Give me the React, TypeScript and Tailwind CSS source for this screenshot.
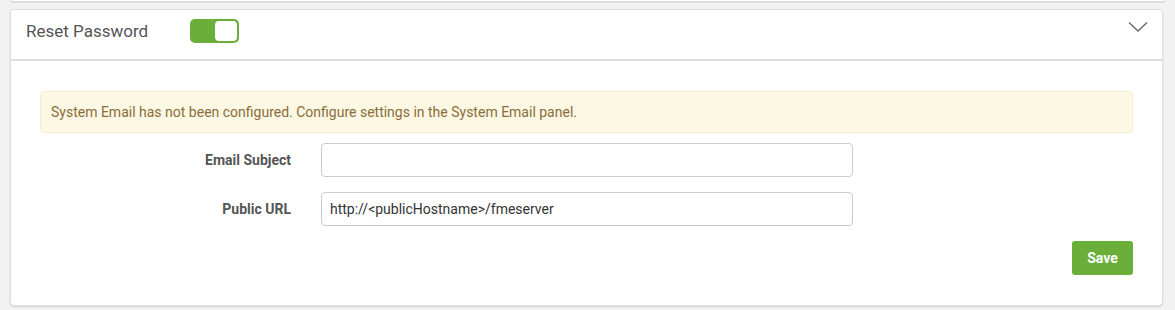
export default function App() {
  return (
    <main
      className="min-h-[310px] bg-[#f2f2f2] px-[10px] text-[#555]"
      style={{ fontFamily: "Roboto, 'Liberation Sans', sans-serif" }}
    >
      {/* tail of the previous panel */}
      <div className="h-[3px] rounded-b-[3px] border-x border-b-2 border-[#ddd] bg-white" />

      <section className="mt-[6px] w-[1153px] overflow-hidden rounded-[4px] border border-[#ddd] bg-white shadow-[0_1px_2px_rgba(0,0,0,0.12)]">
        {/* Header */}
        <div className="flex h-[51px] items-start border-b-2 border-[#ddd] px-[15px] pt-[9px]">
          <h2 className="w-[164px] text-[17px] leading-[24px] text-[#555]">Reset Password</h2>
          <div className="flex h-[24px] w-[49px] items-center justify-end rounded-[5px] bg-[#6aaf3a] p-[2px]">
            <div className="h-[20px] w-[22px] rounded-[4px] bg-white" />
          </div>
          <svg className="ml-auto mr-[-1px] mt-[2px]" width="20" height="12" viewBox="0 0 20 12" fill="none">
            <path d="M1 1.5 L10 10 L19 1.5" stroke="#666" strokeWidth="1.3" />
          </svg>
        </div>

        {/* Body */}
        <div className="px-[29px] pb-[30px] pt-[30px]">
          <div className="flex h-[42px] items-center rounded-[4px] border border-[#faebcc] bg-[#fcf8e3] px-[10px] text-[14px] text-[#8a6d3b]">
            System Email has not been configured. Configure settings in the System Email panel.
          </div>

          <form className="mt-[10px] space-y-[15px]">
            <div className="flex items-center">
              <label className="w-[251px] text-right text-[14px] font-bold text-[#555]">Email Subject</label>
              <input
                type="text"
                className="ml-[30px] h-[34px] w-[532px] rounded-[4px] border border-[#ccc] px-[8px] text-[14px] text-[#333] outline-none"
              />
            </div>
            <div className="flex items-center">
              <label className="w-[251px] text-right text-[14px] font-bold text-[#555]">Public URL</label>
              <input
                type="text"
                defaultValue="http://<publicHostname>/fmeserver"
                className="ml-[30px] h-[34px] w-[532px] rounded-[4px] border border-[#ccc] px-[8px] text-[14px] text-[#333] outline-none"
              />
            </div>
          </form>

          <div className="mt-[15px] flex justify-end">
            <button className="h-[34px] w-[61px] rounded-[3px] bg-[#6aaf3a] text-[14px] font-bold text-white">
              Save
            </button>
          </div>
        </div>
      </section>
    </main>
  );
}
